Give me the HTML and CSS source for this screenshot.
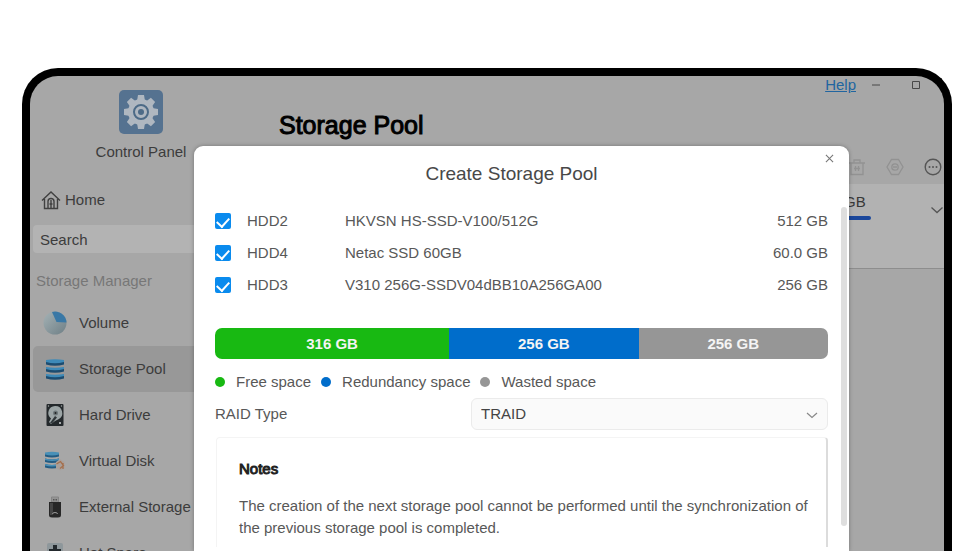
FILE: index.html
```html
<!DOCTYPE html>
<html lang="en">
<head>
<meta charset="utf-8">
<meta name="viewport" content="width=device-width, initial-scale=1">
<title>Storage Pool</title>
<link rel="stylesheet" href="styles.css">
</head>
<body>
<div class="device">
  <aside class="sidebar">
    <div class="brand">
      <svg class="brand-icon" viewBox="0 0 44 44" aria-hidden="true">
        <rect width="44" height="44" rx="5" fill="#557290"/>
        <g fill="#afb7c0">
          <circle cx="22" cy="22" r="13"/>
          <g>
            <path d="M18 11 19 5h6l1 6zM18 33l1 6h6l1-6z"/>
            <path d="M11 18 5 19v6l6 1zM33 18l6 1v6l-6 1z"/>
          </g>
          <g transform="rotate(45 22 22)">
            <path d="M18 11 19 5h6l1 6zM18 33l1 6h6l1-6z"/>
            <path d="M11 18 5 19v6l6 1zM33 18l6 1v6l-6 1z"/>
          </g>
        </g>
        <circle cx="22" cy="22" r="7" fill="none" stroke="#4d6b87" stroke-width="2"/>
        <circle cx="22" cy="22" r="3" fill="#4d6b87"/>
      </svg>
      <span>Control Panel</span>
    </div>
    <a class="home" href="#">
      <svg class="home-icon" viewBox="0 0 20 20" fill="none" stroke="#404040" stroke-width="1.400" aria-hidden="true">
        <path d="M1 10.500 10 2l9 8.500M3.500 9v9.500h13V9M7 18v-6.500a3 3 0 0 1 6 0V18M10 10v8M8.500 14h3"/>
      </svg>
      Home
    </a>
    <input class="search" type="text" placeholder="Search" aria-label="Search">
    <h2 class="group">Storage Manager</h2>
    <nav class="nav">
      <a class="nav-item" href="#">
        <svg class="nav-icon" viewBox="0 0 24 24" aria-hidden="true">
          <defs><linearGradient id="pie" x1="0" y1="0" x2="1" y2="1"><stop offset="0" stop-color="#a5b2b5"/><stop offset="1" stop-color="#6e7f86"/></linearGradient></defs>
          <circle cx="12" cy="12" r="11.500" fill="url(#pie)"/>
          <path d="M9 1A11.500 11.500 0 0 1 23.500 11.500L13.500 11z" fill="#3978a6"/>
        </svg>
        Volume
      </a>
      <a class="nav-item active" href="#" aria-current="page">
        <svg class="nav-icon" viewBox="0 0 24 24" aria-hidden="true">
          <g fill="#1c4c70"><path d="M3 4q9 3 18 0v3.500q-9 2.500-18 0zM3 11q9 3 18 0v3.500q-9 2.500-18 0zM3 18q9 3 18 0v3.500q-9 2.500-18 0z"/></g>
          <g fill="#3e8ab8"><path d="M3 3q9-1.500 18 0v2q-9 2.500-18 0zM3 10q9 1.500 18 0v2q-9 2.500-18 0zM3 17q9 1.500 18 0v2q-9 2.500-18 0z"/></g>
        </svg>
        Storage Pool
      </a>
      <a class="nav-item" href="#">
        <svg class="nav-icon" viewBox="0 0 24 24" aria-hidden="true">
          <rect x="3.500" y="1" width="17" height="22" rx="1" fill="#24292c"/>
          <path d="M12 3a7 7 0 0 1 3.500 13.200L12 18l-4 3-2-2 2-3.500A7 7 0 0 1 12 3z" fill="#9ca5a6"/>
          <circle cx="12.500" cy="10" r="2.500" fill="#6d777a"/><circle cx="12.500" cy="10" r="1" fill="#222"/>
          <path d="m7 20 5-7 2 1.500-5 6z" fill="#30373a"/>
          <g fill="#a4a9aa"><circle cx="5.500" cy="3" r=".700"/><circle cx="18.500" cy="3" r=".700"/><path d="M16 19h2v2h-2z"/></g>
        </svg>
        Hard Drive
      </a>
      <a class="nav-item" href="#">
        <svg class="nav-icon" viewBox="0 0 24 24" aria-hidden="true">
          <path d="M2 4q7 2 14 0v3.500q-7 2-14 0zM2 9.500q7 2 14 0V13q-7 2-14 0zM2 15q7 2 14 0v3.500q-7 2-14 0z" fill="#235b82"/>
          <path d="M2 3.500q7-1.500 14 0v2q-7 2-14 0zM2 9.500q7 2 14 0v1.500q-7 2-14 0zM2 15q7 2 14 0v1.500q-7 2-14 0z" fill="#4990b7"/>
          <path d="m17 10 4.500 3v6L17 21.500 13 19v-6z" fill="#a9a09b"/>
          <path d="m13.500 15 4-2.500 3 4-3.500 3M20 14v6" fill="none" stroke="#a5704d" stroke-width="1.300"/>
        </svg>
        Virtual Disk
      </a>
      <a class="nav-item" href="#">
        <svg class="nav-icon" viewBox="0 0 24 24" aria-hidden="true">
          <path d="M8.500 2h7v5h-7z" fill="#949494" stroke="#858585"/>
          <path d="M10 4h1.500v1.500H10zM12.500 4H14v1.500h-1.500z" fill="#555"/>
          <path d="M6 7h12v13q0 2.500-3 2.500H9q-3 0-3-2.500z" fill="#272727"/>
          <path d="M7 8h3v12H7z" fill="#454545"/>
          <path d="M9.500 19a2.500 1.500 0 0 1 5 0" stroke="#999" fill="none"/>
        </svg>
        External Storage
      </a>
      <a class="nav-item" href="#">
        <svg class="nav-icon" viewBox="0 0 24 24" aria-hidden="true">
          <rect x="4" y="2" width="16" height="20" rx="2" fill="#8e979b"/>
          <path d="M10 4h4v4h4v4h-4v4h-4v-4H6V8h4z" fill="#23292d"/>
        </svg>
        Hot Spare
      </a>
    </nav>
  </aside>

  <main class="main">
    <div class="window-bar">
      <a class="help" href="#">Help</a>
      <button class="win-btn" type="button" aria-label="Minimize"><svg viewBox="0 0 10 10"><path d="M1 5h8" stroke="#484848"/></svg></button>
      <button class="win-btn" type="button" aria-label="Maximize"><svg viewBox="0 0 10 10"><path d="M1.500 1.500h7v7h-7z" fill="none" stroke="#484848"/></svg></button>
    </div>
    <h1 class="page-title">Storage Pool</h1>
    <div class="toolbar">
      <button class="tool" type="button" aria-label="Delete"><svg viewBox="0 0 18 18" fill="none" stroke="#929292" stroke-width="1.300"><path d="M1 5h16M6 5V2h6v3M3 5v11.500h12V5M6 10.500h6M7.500 8v5M10.500 8v5"/></svg></button>
      <button class="tool" type="button" aria-label="Settings"><svg viewBox="0 0 18 18" fill="none" stroke="#929292" stroke-width="1.300"><path d="M5.500 1.500h7L17 9l-4.500 7.500h-7L1 9z"/><circle cx="9" cy="9" r="3.200"/><path d="M7 9h4"/></svg></button>
      <button class="tool" type="button" aria-label="More"><svg viewBox="0 0 18 18"><circle cx="9" cy="9" r="7.800" fill="none" stroke="#555" stroke-width="1.400"/><g fill="#555"><circle cx="5.500" cy="9" r="1"/><circle cx="9" cy="9" r="1"/><circle cx="12.500" cy="9" r="1"/></g></svg></button>
    </div>
    <section class="pool">
      <div class="capacity"><span>GB</span><div class="capacity-bar"></div></div>
      <svg class="pool-toggle" viewBox="0 0 14 14" aria-hidden="true"><path d="m1.500 4.500 5.500 5 5.500-5" fill="none" stroke="#555" stroke-width="1.300"/></svg>
    </section>
  </main>

  <div class="dialog" role="dialog" aria-labelledby="dialog-title">
    <button class="close" type="button" aria-label="Close"><svg viewBox="0 0 10 10"><path d="m1 1 8 8M9 1 1 9" stroke="#777" stroke-width="1.200"/></svg></button>
    <h2 class="dialog-title" id="dialog-title">Create Storage Pool</h2>
    <div class="dialog-body">
      <div class="dialog-content">
        <table class="disks">
          <tbody>
            <tr><td class="pick"><input type="checkbox" id="hdd2" checked></td><td class="slot"><label for="hdd2">HDD2</label></td><td>HKVSN HS-SSD-V100/512G</td><td class="size">512 GB</td></tr>
            <tr><td class="pick"><input type="checkbox" id="hdd4" checked></td><td class="slot"><label for="hdd4">HDD4</label></td><td>Netac SSD 60GB</td><td class="size">60.0 GB</td></tr>
            <tr><td class="pick"><input type="checkbox" id="hdd3" checked></td><td class="slot"><label for="hdd3">HDD3</label></td><td>V310 256G-SSDV04dBB10A256GA00</td><td class="size">256 GB</td></tr>
          </tbody>
        </table>
        <div class="usage">
          <div class="free" style="width:38.200%">316 GB</div>
          <div class="redundancy" style="width:30.900%">256 GB</div>
          <div class="wasted" style="width:30.900%">256 GB</div>
        </div>
        <ul class="legend">
          <li><i class="dot free"></i>Free space</li>
          <li><i class="dot redundancy"></i>Redundancy space</li>
          <li><i class="dot wasted"></i>Wasted space</li>
        </ul>
        <div class="raid">
          <label for="raid-type">RAID Type</label>
          <div class="select">
            <select id="raid-type"><option>TRAID</option></select>
            <svg viewBox="0 0 12 12" aria-hidden="true"><path d="m1 4 5 4.500L11 4" fill="none" stroke="#888" stroke-width="1.200"/></svg>
          </div>
        </div>
        <section class="notes">
          <h3>Notes</h3>
          <p>The creation of the next storage pool cannot be performed until the synchronization of the previous storage pool is completed.</p>
        </section>
      </div>
      <div class="scrollbar"></div>
    </div>
  </div>
</div>
</body>
</html>
```
FILE: styles.css
```css
* { box-sizing: border-box; }

body {
  margin: 0;
  height: 100vh;
  padding: 68px 23px 0 22px;
  overflow: hidden;
  background: #fff;
  color: #585858;
  font: 15px/20px "Liberation Sans", Arial, sans-serif;
}

h1, h2, h3, p, ul { margin: 0; padding: 0; font-weight: normal; }
a { color: inherit; text-decoration: none; }
button { padding: 0; border: 0; background: none; font: inherit; }
svg { display: block; }

.device {
  position: relative;
  display: flex;
  height: 100%;
  border: 8px solid #000;
  border-bottom: 0;
  border-radius: 36px 36px 0 0;
  overflow: hidden;
  background: #a7a7a7;
}

/* Sidebar */
.sidebar { flex: 0 0 222px; color: #3c3c3c; }
.brand { display: flex; flex-direction: column; align-items: center; gap: 8px; padding-top: 14px; }
.brand-icon { width: 44px; height: 44px; }
.home { display: flex; align-items: center; gap: 4px; height: 40px; margin: 18px 0 5px 11px; }
.home-icon { width: 20px; height: 20px; }
.search {
  display: block;
  width: 100%;
  height: 28px;
  margin-left: 3px;
  padding: 0 7px;
  border: 0;
  border-radius: 4px;
  background: #b3b3b3;
  color: #3c3c3c;
  font: inherit;
}
.search::placeholder { color: #3c3c3c; opacity: 1; }
.group { padding: 18px 6px 9px; font-size: 15px; line-height: 20px; color: #777; }
.nav-item { display: flex; align-items: center; gap: 12px; height: 46px; margin-left: 3px; padding-left: 10px; border-radius: 5px; }
.nav-item.active { background: #989898; }
.nav-icon { width: 24px; height: 24px; }

/* Page behind the dialog */
.main { flex: 1; min-width: 0; }
.window-bar { display: flex; justify-content: flex-end; align-items: center; height: 18px; padding-right: 22px; }
.help { margin-right: 14px; color: #2165a0; text-decoration: underline; }
.win-btn { width: 12px; margin-left: 28px; }
.help + .win-btn { margin-left: 0; }
.win-btn svg { width: 10px; height: 10px; margin: 0 auto; }
.page-title { padding-left: 27px; font-size: 25px; line-height: 62px; color: #000; -webkit-text-stroke: 1px #000; }
.toolbar { display: flex; justify-content: flex-end; gap: 20px; height: 28px; padding: 2px 2px 0 0; }
.tool { width: 18px; height: 18px; }
.tool svg { width: 18px; height: 18px; }
.pool {
  display: flex;
  justify-content: flex-end;
  gap: 59px;
  height: 85px;
  padding-top: 8px;
  background: #b2b2b2;
  border-bottom: 1px solid #8d8d8d;
}
.capacity { color: #383838; }
.capacity-bar { width: 27px; height: 4px; margin-top: 4px; border-radius: 2px; background: #1b479b; }
.pool-toggle { width: 14px; height: 14px; margin-top: 11px; }

/* Dialog */
.dialog {
  position: absolute;
  inset: 70px 95px 0 164px;
  border-radius: 9px 9px 0 0;
  background: #fff;
  box-shadow: 0 0 4px rgba(0, 0, 0, .3);
}
.close { position: absolute; top: 8px; right: 15px; }
.close svg { width: 9px; height: 9px; }
.dialog-title { padding-top: 16px; padding-right: 20px; font-size: 19px; line-height: 24px; text-align: center; color: #484848; }
.dialog-body { display: flex; margin-top: 21px; padding: 0 2px 0 21px; }
.dialog-content { flex: 1; min-width: 0; }
.scrollbar { width: 6px; height: 319px; margin-left: 13px; border-radius: 3px; background: #dedede; }
.disks { width: 100%; margin-top: -2px; border-collapse: collapse; }
.disks td { height: 32px; padding: 0; }
.disks .pick { width: 32px; }
.disks .slot { width: 98px; }
.disks .size { text-align: right; }
.pick input {
  display: block;
  appearance: none;
  width: 16px;
  height: 16px;
  margin: 0;
  border-radius: 2px;
  background: #0a8bee;
}
.pick input:checked::after {
  content: "";
  display: block;
  width: 6px;
  height: 10px;
  margin: 0 auto;
  border: solid #fff;
  border-width: 0 2px 2px 0;
  transform: translateY(2px) rotate(42deg);
}
.usage {
  display: flex;
  height: 31px;
  margin-top: 27px;
  border-radius: 7px;
  overflow: hidden;
  color: #f4f4f4;
  font-weight: bold;
  line-height: 31px;
  text-align: center;
}
.free { background: #18b912; }
.redundancy { background: #006dcb; }
.wasted { background: #969696; }
.legend { display: flex; gap: 10px; margin-top: 13px; list-style: none; }
.legend li { display: flex; align-items: center; gap: 11px; }
.dot { width: 10px; height: 10px; border-radius: 50%; }
.raid { display: flex; justify-content: space-between; align-items: center; margin-top: 6px; }
.select { position: relative; width: 357px; }
.select select {
  display: block;
  appearance: none;
  width: 100%;
  height: 32px;
  padding: 0 9px;
  border: 1px solid #ebebeb;
  border-radius: 6px;
  background: #fafafa;
  color: #444;
  font: inherit;
}
.select svg { position: absolute; top: 11px; right: 10px; width: 12px; height: 12px; pointer-events: none; }
.notes {
  margin: 7px 0 0 1px;
  padding: 21px 14px 8px 22px;
  border: 1px solid #f4f4f4;
  border-right: 2px solid #dcdcdc;
  border-bottom: 0;
  border-radius: 4px 4px 0 0;
}
.notes h3 { font-size: 15px; line-height: 20px; color: #222; -webkit-text-stroke: 1px #222; }
.notes p { margin-top: 16px; line-height: 22px; }
```
